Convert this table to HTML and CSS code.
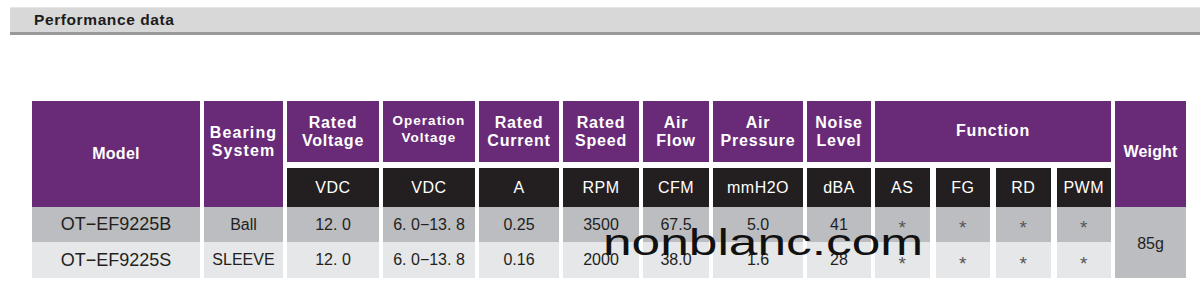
FILE: index.html
```html
<!DOCTYPE html>
<html>
<head>
<meta charset="utf-8">
<link rel="stylesheet" href="styles.css">
</head>
<body>
<div class="titlebar"><span class="title">Performance data</span></div>
<div class="wrap">
  <div class="spec">
    <div class="h model">Model</div>
    <div class="h bearing tall">Bearing<br>System</div>
    <div class="h">Rated<br>Voltage</div>
    <div class="h small">Operation<br>Voltage</div>
    <div class="h">Rated<br>Current</div>
    <div class="h">Rated<br>Speed</div>
    <div class="h">Air<br>Flow</div>
    <div class="h">Air<br>Pressure</div>
    <div class="h">Noise<br>Level</div>
    <div class="h func">Function</div>
    <div class="h weight">Weight</div>

    <div class="u c3">VDC</div>
    <div class="u">VDC</div>
    <div class="u">A</div>
    <div class="u">RPM</div>
    <div class="u">CFM</div>
    <div class="u">mmH2O</div>
    <div class="u">dBA</div>
    <div class="sub sub-u"><div class="u">AS</div><div class="u">FG</div><div class="u">RD</div><div class="u">PWM</div></div>

    <div class="d r1 c1 big">OT−EF9225B</div>
    <div class="d r1">Ball</div>
    <div class="d r1">12. 0</div>
    <div class="d r1">6. 0−13. 8</div>
    <div class="d r1">0.25</div>
    <div class="d r1">3500</div>
    <div class="d r1">67.5</div>
    <div class="d r1">5.0</div>
    <div class="d r1">41</div>
    <div class="sub sub-1"><div class="d s1 star">*</div><div class="d s1 star">*</div><div class="d s1 star">*</div><div class="d s1 star">*</div></div>
    <div class="d wt">85g</div>

    <div class="d r2 c1 big">OT−EF9225S</div>
    <div class="d r2">SLEEVE</div>
    <div class="d r2">12. 0</div>
    <div class="d r2">6. 0−13. 8</div>
    <div class="d r2">0.16</div>
    <div class="d r2">2000</div>
    <div class="d r2">38.0</div>
    <div class="d r2">1.6</div>
    <div class="d r2">28</div>
    <div class="sub sub-2"><div class="d s2 star">*</div><div class="d s2 star">*</div><div class="d s2 star">*</div><div class="d s2 star">*</div></div>
  </div>
  <div class="watermark">nonblanc.com</div>
</div>
</body>
</html>
```

FILE: styles.css
```css
html, body {
  margin: 0;
  padding: 0;
  background: #ffffff;
  font-family: "Liberation Sans", Arial, sans-serif;
}

.titlebar {
  margin: 7px 0 0 10px;
  height: 24px;
  background: #d8d8d8;
  border-top: 1px solid #e6e6e6;
  border-bottom: 3px solid #999999;
  display: flex;
  align-items: center;
  padding-left: 24px;
}

.title {
  font-size: 15.5px;
  font-weight: bold;
  letter-spacing: 0.6px;
  color: #1c1c1c;
}

.wrap {
  position: relative;
  padding: 66px 0 0 32px;
}

.spec {
  display: grid;
  grid-template-columns: 168px 79px 92px 92px 80px 76px 66px 90px 64px 236px 71px;
  grid-template-rows: 61px 6px 39px 35px 36px;
  column-gap: 4px;
}

.h {
  grid-row: 1;
  background: #692b78;
  color: #ffffff;
  font-weight: bold;
  font-size: 16px;
  line-height: 18px;
  letter-spacing: 0.8px;
  display: flex;
  align-items: center;
  justify-content: center;
  text-align: center;
}

.h.small {
  font-size: 13.5px;
  line-height: 17px;
  letter-spacing: 1px;
  padding-bottom: 6px;
}

.h.model {
  grid-row: 1 / 4;
  letter-spacing: 0.3px;
}

.h.bearing {
  grid-row: 1 / 4;
  letter-spacing: 1.1px;
  padding-bottom: 24px;
}

.h.func {
  grid-column: 10;
  padding-bottom: 2px;
}

.h.weight {
  grid-column: 11;
  grid-row: 1 / 4;
  letter-spacing: 0.2px;
  padding-bottom: 4px;
}

.u {
  grid-row: 3;
  background: #231f20;
  color: #ffffff;
  font-size: 16px;
  letter-spacing: 0.5px;
  display: flex;
  align-items: center;
  justify-content: center;
}

.c3 {
  grid-column: 3;
}

.c1 {
  grid-column: 1;
}

.sub {
  grid-column: 10;
  display: flex;
  gap: 6px;
}

.sub > div {
  flex: 1;
}

.sub-u {
  grid-row: 3;
}

.sub-1 {
  grid-row: 4;
}

.sub-2 {
  grid-row: 5;
}

.d {
  color: #231f20;
  font-size: 16px;
  display: flex;
  align-items: center;
  justify-content: center;
}

.r1 {
  grid-row: 4;
  background: #bcbdc0;
}

.r2 {
  grid-row: 5;
  background: #e6e7e8;
}

.s1 {
  background: #bcbdc0;
}

.s2 {
  background: #e6e7e8;
}

.big {
  font-size: 18px;
}

.star {
  color: #555555;
  font-size: 19px;
  padding-top: 7px;
  box-sizing: border-box;
}

.wt {
  grid-column: 11;
  grid-row: 4 / 6;
  background: #bcbdc0;
  padding-top: 2px;
}

.watermark {
  position: absolute;
  left: 603px;
  top: 189px;
  font-size: 37px;
  line-height: 37px;
  color: #111111;
  transform: scaleX(1.39);
  transform-origin: 0 0;
  white-space: nowrap;
}
```
